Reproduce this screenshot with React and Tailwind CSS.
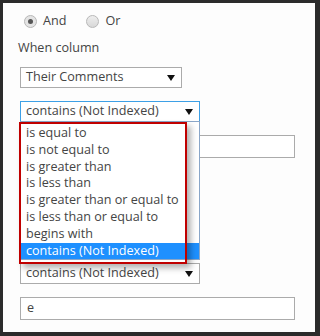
import React from "react";

function Arrow() {
  return (
    <svg width="8" height="6" viewBox="0 0 8 6" className="shrink-0">
      <path d="M0 0 H8 L4 6 Z" fill="#111" />
    </svg>
  );
}

const items = [
  "is equal to",
  "is not equal to",
  "is greater than",
  "is less than",
  "is greater than or equal to",
  "is less than or equal to",
  "begins with",
  "contains (Not Indexed)",
];

export default function App() {
  return (
    <div
      className="w-[320px] h-[336px] bg-[#2b2b2b] pl-[3px] pt-[3px] pr-[5px] pb-[4px]"
      style={{ fontFamily: '"Open Sans", "Noto Sans", sans-serif' }}
    >
      <div className="w-full h-full bg-[#fdfdfd] text-[12.6px] text-[#444] pl-[17px] flex flex-col">
        <div className="flex items-center h-[20px] mt-[8px] pl-[4px]">
          <span className="w-[13px] h-[13px] rounded-full border border-[#b8b8b8] bg-[#e4e4e4] flex items-center justify-center">
            <span className="w-[5px] h-[5px] rounded-full bg-[#555]" />
          </span>
          <span className="ml-[6px]">And</span>
          <span className="ml-[20px] w-[13px] h-[13px] rounded-full border border-[#b8b8b8] bg-gradient-to-b from-[#eee] to-[#d8d8d8]" />
          <span className="ml-[6px]">Or</span>
        </div>
        <div className="mt-[8px] h-[18px] leading-[18px] -ml-[2px]">When column</div>
        <div className="mt-[10px] w-[162px] h-[21px] border border-[#ababab] bg-white flex items-center justify-between pl-[5px] pr-[6px]">
          <span>Their Comments</span>
          <Arrow />
        </div>
        <div className="relative mt-[13px] w-[180px] h-[21px] border border-[#3da0e6] bg-white flex items-center justify-between pl-[5px] pr-[6px]">
          <span>contains (Not Indexed)</span>
          <Arrow />
          <div className="absolute left-[-1px] top-[19px] w-[180px] h-[139px] bg-white border border-[#8aa6c8] z-10">
            <div className="flex flex-col pt-[3px]">
              {items.map((t, i) => (
                <div
                  key={t}
                  className={
                    "h-[16.8px] leading-[16.8px] pl-[5px] whitespace-nowrap " +
                    (i === items.length - 1 ? "bg-[#1e90ff] text-white" : "")
                  }
                >
                  {t}
                </div>
              ))}
            </div>
          </div>
          <div className="absolute left-[-2px] top-[20px] w-[168px] h-[142px] border-2 border-[#c00000] z-20 shadow-[4px_4px_6px_rgba(0,0,0,0.3)]" />
        </div>
        <div className="mt-[13px] w-[275px] h-[23px] border border-[#ababab] bg-white" />
        <div className="mt-[105px] w-[180px] h-[21px] border border-[#ababab] bg-white flex items-center justify-between pl-[5px] pr-[6px]">
          <span>contains (Not Indexed)</span>
          <Arrow />
        </div>
        <div className="mt-[13px] w-[275px] h-[23px] border border-[#ababab] bg-white flex items-center pl-[6px]">
          <span>e</span>
        </div>
      </div>
    </div>
  );
}
